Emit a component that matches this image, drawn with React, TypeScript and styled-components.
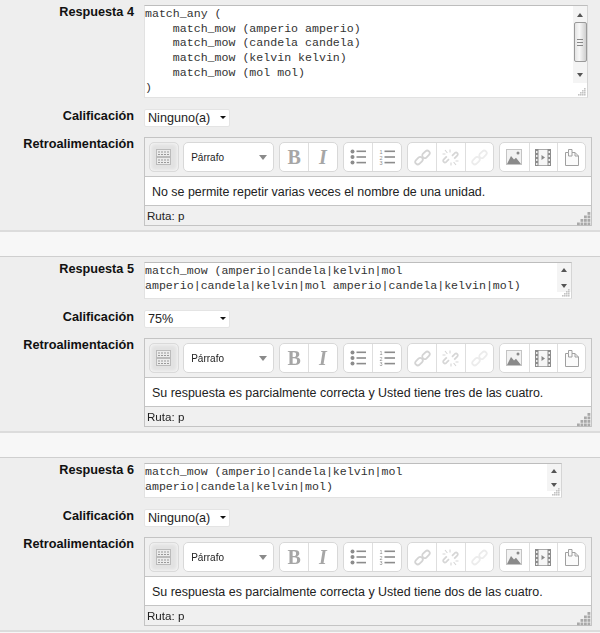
import styled, { createGlobalStyle } from 'styled-components'

const GlobalStyle = createGlobalStyle`
  html, body {
    margin: 0;
    padding: 0;
    background: #f7f7f7;
    font-family: "Liberation Sans", Arial, sans-serif;
    overflow: hidden;
  }
`

const ANSWERS = [
  {
    id: 4,
    code: `match_any (
    match_mow (amperio amperio)
    match_mow (candela candela)
    match_mow (kelvin kelvin)
    match_mow (mol mol)
)`,
    codeWidth: 444,
    codeHeight: 93,
    grade: 'Ninguno(a)',
    feedback: 'No se permite repetir varias veces el nombre de una unidad.',
    tall: true,
  },
  {
    id: 5,
    code: `match_mow (amperio|candela|kelvin|mol
amperio|candela|kelvin|mol amperio|candela|kelvin|mol)`,
    codeWidth: 428,
    codeHeight: 37,
    grade: '75%',
    feedback: 'Su respuesta es parcialmente correcta y Usted tiene tres de las cuatro.',
    tall: false,
  },
  {
    id: 6,
    code: `match_mow (amperio|candela|kelvin|mol
amperio|candela|kelvin|mol)`,
    codeWidth: 418,
    codeHeight: 35,
    grade: 'Ninguno(a)',
    feedback: 'Su respuesta es parcialmente correcta y Usted tiene dos de las cuatro.',
    tall: false,
  },
]

function GridIcon() {
  return (
    <svg width="15" height="16" viewBox="0 0 15 16">
      <rect x="0.5" y="0.5" width="14" height="7" fill="#ececec" stroke="#bbb" />
      <rect x="0.5" y="8.5" width="14" height="7" fill="#ececec" stroke="#bbb" />
      <path d="M2 3h11M2 5.5h11M2 11h11M2 13.5h11" stroke="#999" strokeWidth="1" strokeDasharray="2 1" />
    </svg>
  )
}

function BulletIcon() {
  return (
    <svg width="16" height="16" viewBox="0 0 16 16" fill="#8c8c8c">
      <circle cx="2.5" cy="2.5" r="2" />
      <circle cx="2.5" cy="8" r="2" />
      <circle cx="2.5" cy="13.5" r="2" />
      <rect x="6.5" y="1.5" width="9.5" height="1.6" />
      <rect x="6.5" y="7.2" width="9.5" height="1.6" />
      <rect x="6.5" y="12.8" width="9.5" height="1.6" />
    </svg>
  )
}

function NumberIcon() {
  return (
    <svg width="16" height="16" viewBox="0 0 16 16" fill="#8c8c8c">
      <text x="0.5" y="5" fontSize="5.5" fontFamily="Liberation Sans">1</text>
      <text x="0.5" y="10.5" fontSize="5.5" fontFamily="Liberation Sans">2</text>
      <text x="0.5" y="16" fontSize="5.5" fontFamily="Liberation Sans">3</text>
      <rect x="5.5" y="1.5" width="10.5" height="1.6" />
      <rect x="5.5" y="7.2" width="10.5" height="1.6" />
      <rect x="5.5" y="12.8" width="10.5" height="1.6" />
    </svg>
  )
}

function LinkIcon({ color }: { color: string }) {
  return (
    <svg width="17" height="17" viewBox="0 0 17 17" fill="none" stroke={color} strokeWidth="1.8">
      <rect x="0.8" y="9.2" width="8.4" height="5" rx="2.5" transform="rotate(-45 5 11.7)" />
      <rect x="7.8" y="2.8" width="8.4" height="5" rx="2.5" transform="rotate(-45 12 5.3)" />
    </svg>
  )
}

function UnlinkIcon() {
  return (
    <svg width="17" height="17" viewBox="0 0 17 17" fill="none" stroke="#d6d6d6" strokeWidth="1.7">
      <path d="M7 10.2l-3 3a1.8 1.8 0 0 1-2.4-2.6l3.2-3.2" />
      <path d="M10 6.8l3-3a1.8 1.8 0 0 1 2.4 2.6l-3.2 3.2" />
      <path d="M3 1l2.4 3M14 16l-2.4-3M8 .5v3M9 13.5v3M.5 5h3M13.5 12h3" strokeWidth="1.1" />
    </svg>
  )
}

function ImageIcon() {
  return (
    <svg width="16" height="16" viewBox="0 0 16 16">
      <rect x="0.5" y="0.5" width="15" height="15" fill="#f2f2f2" stroke="#c4c4c4" />
      <path d="M1 15l4-8 3 3.5 2-1.8 5 6.3z" fill="#8a8a8a" />
      <circle cx="12" cy="4" r="1.5" fill="#8a8a8a" />
    </svg>
  )
}

function VideoIcon() {
  return (
    <svg width="16" height="17" viewBox="0 0 16 17">
      <rect x="0.5" y="0.5" width="15" height="16" fill="#f6f6f6" stroke="#aaa" />
      <path d="M0 0h3.5v17H0zM12.5 0H16v17h-3.5z" fill="#8c8c8c" />
      <path d="M1 2h1.5v2H1zM1 6h1.5v2H1zM1 10h1.5v2H1zM1 14h1.5v2H1zM13.5 2H15v2h-1.5zM13.5 6H15v2h-1.5zM13.5 10H15v2h-1.5zM13.5 14H15v2h-1.5z" fill="#eee" />
      <path d="M6.5 6L10 8.5 6.5 11z" fill="#888" />
    </svg>
  )
}

function PasteIcon() {
  return (
    <svg width="14" height="17" viewBox="0 0 14 17" fill="#fbfbfb" stroke="#a0a0a0" strokeWidth="1">
      <path d="M.5 3.5h3v-3h3.5v3h3l3.5 3.5v9.5H.5z" />
      <path d="M3.5 3.5v3.5H7V3.5" fill="none" />
      <path d="M10 3.5V7h3.5" fill="none" />
    </svg>
  )
}

function ResizeGrip({ size, color }: { size: number; color: string }) {
  const dots = []
  for (let row = 0; row < 4; row++) {
    for (let col = 3 - row; col < 4; col++) {
      dots.push(<rect key={`${row}-${col}`} x={col * 3} y={row * 3} width="2.4" height="2.4" fill={color} />)
    }
  }
  return (
    <svg width={size} height={size} viewBox="0 0 12 12">
      {dots}
    </svg>
  )
}

function AnswerBlock({ answer }: { answer: (typeof ANSWERS)[number] }) {
  return (
    <Section>
      <Row>
        <Label>Respuesta {answer.id}</Label>
        <CodeBox $width={answer.codeWidth} $height={answer.codeHeight}>
          <Code>{answer.code}</Code>
          <ScrollBar $tall={answer.tall}>
            <ArrowUp />
            {answer.tall && (
              <Thumb>
                <ThumbGrip />
              </Thumb>
            )}
            <ArrowDown />
          </ScrollBar>
          <CodeGrip>
            <ResizeGrip size={8} color="#c4c4c4" />
          </CodeGrip>
        </CodeBox>
      </Row>

      <Row>
        <Label>Calificación</Label>
        <GradeSelect>
          <span>{answer.grade}</span>
          <SelectCaret />
        </GradeSelect>
      </Row>

      <Row>
        <Label>Retroalimentación</Label>
        <Editor>
          <Toolbar>
            <KitchenButton>
              <GridIcon />
            </KitchenButton>
            <FormatSelect>
              <span>Párrafo</span>
              <FormatCaret />
            </FormatSelect>
            <ButtonGroup>
              <ToolButton>
                <BoldGlyph>B</BoldGlyph>
              </ToolButton>
              <ToolButton>
                <ItalicGlyph>I</ItalicGlyph>
              </ToolButton>
            </ButtonGroup>
            <ButtonGroup>
              <ToolButton>
                <BulletIcon />
              </ToolButton>
              <ToolButton>
                <NumberIcon />
              </ToolButton>
            </ButtonGroup>
            <ButtonGroup>
              <ToolButton>
                <LinkIcon color="#d4d4d4" />
              </ToolButton>
              <ToolButton>
                <UnlinkIcon />
              </ToolButton>
              <ToolButton>
                <LinkIcon color="#ececec" />
              </ToolButton>
            </ButtonGroup>
            <ButtonGroup>
              <ToolButton>
                <ImageIcon />
              </ToolButton>
              <ToolButton>
                <VideoIcon />
              </ToolButton>
              <ToolButton>
                <PasteIcon />
              </ToolButton>
            </ButtonGroup>
          </Toolbar>
          <EditorBody>{answer.feedback}</EditorBody>
          <StatusBar>
            <span>Ruta: p</span>
            <StatusGrip>
              <ResizeGrip size={14} color="#a8a8a8" />
            </StatusGrip>
          </StatusBar>
        </Editor>
      </Row>
    </Section>
  )
}

export default function App() {
  return (
    <>
      <GlobalStyle />
      <Page>
        {ANSWERS.map((answer) => (
          <AnswerBlock key={answer.id} answer={answer} />
        ))}
      </Page>
    </>
  )
}

const Page = styled.div`
  display: flex;
  flex-direction: column;
  gap: 24px;
  width: 600px;
  height: 634px;
  overflow: hidden;
  margin-top: -1px;
  filter: blur(0.3px);
`

const Section = styled.section`
  display: flex;
  flex-direction: column;
  gap: 10.5px;
  padding: 5px 0 4px;
  background: #eeeeee;
  border-top: 1px solid #cfcfcf;
  border-bottom: 2px solid #dcdcdc;
`

const Row = styled.div`
  display: grid;
  grid-template-columns: 134px auto;
  column-gap: 10px;
  justify-content: start;
  align-items: start;
`

const Label = styled.label`
  text-align: right;
  font-size: 12.7px;
  font-weight: bold;
  line-height: 14px;
  color: #111;
`

const CodeBox = styled.div<{ $width: number; $height: number }>`
  position: relative;
  display: flex;
  box-sizing: border-box;
  width: ${(p) => p.$width}px;
  height: ${(p) => p.$height}px;
  background: #fff;
  border: 1px solid #e2e2e2;
  border-top-color: #bdbdbd;
  border-right-color: #d5d5d5;
`

const Code = styled.pre`
  flex: 1;
  margin: 0;
  padding: 1px 0 0;
  font-family: "Liberation Mono", "Courier New", monospace;
  font-size: 11.6px;
  line-height: 14.7px;
  color: #333;
`

const ScrollBar = styled.div<{ $tall: boolean }>`
  display: flex;
  flex-direction: column;
  align-items: center;
  box-sizing: border-box;
  width: 14px;
  margin-bottom: ${(p) => (p.$tall ? 14 : 6)}px;
  padding: ${(p) => (p.$tall ? '7px 0 6px' : '5px 0 4px')};
  background: #f4f4f4;
`

const ArrowUp = styled.i`
  width: 0;
  height: 0;
  border-left: 3px solid transparent;
  border-right: 3px solid transparent;
  border-bottom: 4px solid #555;
`

const ArrowDown = styled.i`
  width: 0;
  height: 0;
  margin-top: auto;
  border-left: 3px solid transparent;
  border-right: 3px solid transparent;
  border-top: 4px solid #555;
`

const Thumb = styled.div`
  display: flex;
  align-items: center;
  justify-content: center;
  box-sizing: border-box;
  width: 13px;
  height: 40px;
  margin-top: 5px;
  background: linear-gradient(to right, #e4e4e4, #f8f8f8 40%, #cfcfcf);
  border: 1px solid #9a9a9a;
  border-radius: 2px;
`

const ThumbGrip = styled.i`
  width: 6px;
  height: 5px;
  border-top: 1px solid #888;
  border-bottom: 1px solid #888;
  background: linear-gradient(#888, #888) center / 100% 1px no-repeat;
`

const CodeGrip = styled.div`
  position: absolute;
  right: 1px;
  bottom: 1px;
  display: flex;
`

const GradeSelect = styled.div`
  display: flex;
  align-items: center;
  justify-content: space-between;
  box-sizing: border-box;
  width: 86px;
  height: 18px;
  padding: 0 3px 0 3px;
  font-size: 12.6px;
  color: #222;
  background: #fff;
  border: 1px solid #e4e4e4;
  border-radius: 2px;
`

const SelectCaret = styled.i`
  width: 0;
  height: 0;
  border-left: 3px solid transparent;
  border-right: 3px solid transparent;
  border-top: 3px solid #111;
`

const Editor = styled.div`
  display: flex;
  flex-direction: column;
  box-sizing: border-box;
  width: 448px;
  height: 89px;
  border: 1px solid #c4c4c4;
  background: #f0f0f0;
`

const Toolbar = styled.div`
  display: flex;
  gap: 5.2px;
  box-sizing: border-box;
  height: 39px;
  flex-shrink: 0;
  padding: 4px 0 0 3.5px;
  border-bottom: 1px solid #c4c4c4;
`

const KitchenButton = styled.div`
  display: flex;
  flex-shrink: 0;
  align-items: center;
  justify-content: center;
  box-sizing: border-box;
  width: 30.5px;
  height: 30px;
  margin-right: -1px;
  background: #e2e2e2;
  border: 1px solid #dadada;
  border-radius: 5px;
  box-shadow: inset 0 0 4px #fff;
`

const FormatSelect = styled.div`
  display: flex;
  flex-shrink: 0;
  align-items: center;
  justify-content: space-between;
  box-sizing: border-box;
  width: 90.5px;
  height: 30px;
  padding: 0 6px 0 7px;
  font-size: 10px;
  color: #222;
  background: #fff;
  border: 1px solid #d8d8d8;
  border-radius: 5px;
`

const FormatCaret = styled.i`
  width: 0;
  height: 0;
  border-left: 4.5px solid transparent;
  border-right: 4.5px solid transparent;
  border-top: 5px solid #8a8a8a;
`

const ButtonGroup = styled.div`
  display: flex;
  flex-shrink: 0;
  height: 30px;
  background: #fff;
  border: 1px solid #d8d8d8;
  border-radius: 5px;
  box-sizing: border-box;
`

const ToolButton = styled.div`
  display: flex;
  align-items: center;
  justify-content: center;
  box-sizing: border-box;
  width: 28.4px;
  height: 100%;
  border-left: 1px solid #dedede;

  &:first-child {
    border-left: 0;
  }
`

const BoldGlyph = styled.span`
  font-family: "Liberation Serif", serif;
  font-size: 20px;
  font-weight: bold;
  color: #a6a6a6;
`

const ItalicGlyph = styled.span`
  font-family: "Liberation Serif", serif;
  font-size: 20px;
  font-weight: bold;
  font-style: italic;
  color: #a6a6a6;
`

const EditorBody = styled.div`
  box-sizing: border-box;
  height: 29px;
  flex-shrink: 0;
  padding: 0 7px;
  font-size: 12.45px;
  line-height: 30px;
  color: #222;
  background: #fff;
  border-bottom: 1px solid #c4c4c4;
`

const StatusBar = styled.div`
  position: relative;
  flex: 1;
  padding-left: 2px;
  font-size: 11.6px;
  line-height: 20px;
  color: #222;
`

const StatusGrip = styled.div`
  position: absolute;
  right: 0;
  bottom: 0;
  display: flex;
`
